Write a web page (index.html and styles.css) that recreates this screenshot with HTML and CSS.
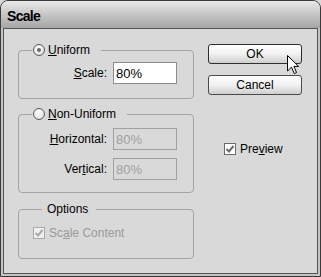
FILE: index.html
```html
<!DOCTYPE html>
<html>
<head>
  <title>Scale</title>
  <link rel="stylesheet" href="styles.css">
</head>
<body>
  <div class="window">
    <div class="titlebar">Scale</div>
    <div class="frame">
      <div class="panel">
        <div class="left">
          <fieldset class="group group-uniform">
            <legend class="radio-legend"><span class="radio checked"></span><span><u>U</u>niform</span></legend>
            <div class="fields">
              <label class="field-label"><u>S</u>cale:</label>
              <input class="field" type="text" value="80%">
            </div>
          </fieldset>

          <fieldset class="group group-non">
            <legend class="radio-legend"><span class="radio"></span><span><u>N</u>on-Uniform</span></legend>
            <div class="fields">
              <label class="field-label"><u>H</u>orizontal:</label>
              <input class="field" type="text" value="80%" disabled>
              <label class="field-label">Ver<u>t</u>ical:</label>
              <input class="field" type="text" value="80%" disabled>
            </div>
          </fieldset>

          <fieldset class="group group-options">
            <legend class="text-legend">Options</legend>
            <div class="check-row disabled">
              <span class="check">
                <svg width="10" height="10" viewBox="0 0 10 10"><polyline points="1.5,5 4,7.5 8.5,2" fill="none" stroke="#a8a8a8" stroke-width="2"/></svg>
              </span>
              <span>Sc<u>a</u>le Content</span>
            </div>
          </fieldset>
        </div>

        <div class="right">
          <button class="btn btn-default">OK</button>
          <button class="btn btn-cancel">Cancel</button>
          <div class="check-row preview">
            <span class="check">
              <svg width="10" height="10" viewBox="0 0 10 10"><polyline points="1.5,5 4,7.5 8.5,2" fill="none" stroke="#6a6a6a" stroke-width="2"/></svg>
            </span>
            <span>Pre<u>v</u>iew</span>
          </div>
        </div>
      </div>
    </div>

    <!-- mouse pointer over the OK button -->
    <svg class="cursor" width="13" height="20" viewBox="0 0 13 20">
      <path d="M0.5 0.5 V16 L4.5 12.2 L7.3 18.6 L9.6 17.6 L6.9 11.4 H11.6 Z" fill="#fff" stroke="#000" stroke-width="1" stroke-linejoin="miter"/>
    </svg>
  </div>
</body>
</html>
```

FILE: styles.css
```css
body {
  margin: 0;
  background-color: #d9d9d9;
  font-family: "Liberation Sans", Arial, sans-serif;
  font-size: 12px;
  color: #000;
}

.window {
  position: relative;
  width: 321px;
  height: 277px;
  box-sizing: border-box;
  border: 1px solid #3a3a3a;
  border-radius: 8px 8px 0 0;
  background-color: #c4c4c4;
  display: flex;
  flex-direction: column;
  overflow: hidden;
}

.titlebar {
  height: 27px;
  flex: none;
  box-sizing: border-box;
  padding: 4px 0 0 6px;
  font-size: 14px;
  font-weight: bold;
  letter-spacing: -0.7px;
  line-height: 22px;
  background: linear-gradient(#e9e9e9, #c9c9c9 45%, #a6a6a6);
}

.frame {
  flex: 1;
  display: flex;
  padding: 0 2px 2px;
}

.panel {
  flex: 1;
  display: flex;
  gap: 14px;
  padding: 14px 0 0 14px;
  border: 1px solid #555;
  background-color: #d9d9d9;
}

.left {
  width: 176px;
  display: flex;
  flex-direction: column;
}

.group {
  margin: 0;
  padding: 0;
  width: 176px;
  min-width: 0;
  box-sizing: border-box;
  border: 1px solid #a4a4a4;
  border-radius: 4px;
}

.group legend {
  line-height: 14px;
}

.radio-legend {
  display: flex;
  align-items: center;
  gap: 3px;
  margin-left: 13px;
  padding: 0 11px 0 1px;
}

.text-legend {
  margin-left: 9px;
  padding: 0 8px 0 5px;
}

.group-uniform .fields {
  padding: 5px 0 14px;
}

.group-non {
  margin-top: 8px;
}

.group-non .fields {
  padding: 7px 0 12px;
}

.group-options {
  margin-top: 9px;
  padding: 10px 0 18px 14px;
}

.radio {
  width: 12px;
  height: 12px;
  box-sizing: border-box;
  border: 1px solid #5a5a5a;
  border-radius: 50%;
  background: radial-gradient(circle at 40% 35%, #fff, #e4e4e4 70%, #c8c8c8);
  position: relative;
}

.radio.checked::after {
  content: "";
  position: absolute;
  left: 3px;
  top: 3px;
  width: 4px;
  height: 4px;
  border-radius: 50%;
  background-color: #6a6a6a;
}

.fields {
  display: grid;
  grid-template-columns: 88px 64px;
  column-gap: 6px;
  row-gap: 8px;
  align-items: center;
}

.field-label {
  text-align: right;
}

.field {
  width: 64px;
  height: 22px;
  box-sizing: border-box;
  margin: 0;
  padding: 0 2px;
  border: 1px solid #8c8c8c;
  background-color: #fff;
  font-family: "Liberation Sans", Arial, sans-serif;
  font-size: 13px;
  color: #000;
}

.field:disabled {
  background-color: #d9d9d9;
  border-color: #a0a0a0;
  color: #a0a0a0;
}

.check-row {
  display: flex;
  align-items: center;
  gap: 4px;
  line-height: 14px;
}

.check {
  width: 12px;
  height: 12px;
  box-sizing: border-box;
  border: 1px solid #6a6a6a;
  background-color: #fff;
  display: flex;
  align-items: center;
  justify-content: center;
}

.check-row.disabled {
  color: #9a9a9a;
}

.check-row.disabled .check {
  border-color: #a8a8a8;
  background-color: #f0f0f0;
}

.right {
  width: 94px;
  display: flex;
  flex-direction: column;
  padding-top: 1px;
}

.btn {
  height: 20px;
  margin: 0;
  padding: 0;
  border: 1px solid #4a4a4a;
  border-radius: 3px;
  background: linear-gradient(#ffffff, #f1f1f1 50%, #cfcfcf);
  font-family: "Liberation Sans", Arial, sans-serif;
  font-size: 12px;
  color: #000;
}

.btn-default {
  border-color: #2e2e2e;
}

.btn-cancel {
  margin-top: 11px;
}

.preview {
  margin-top: 47px;
  padding-left: 16px;
}

.cursor {
  position: absolute;
  left: 286px;
  top: 54px;
}
```
